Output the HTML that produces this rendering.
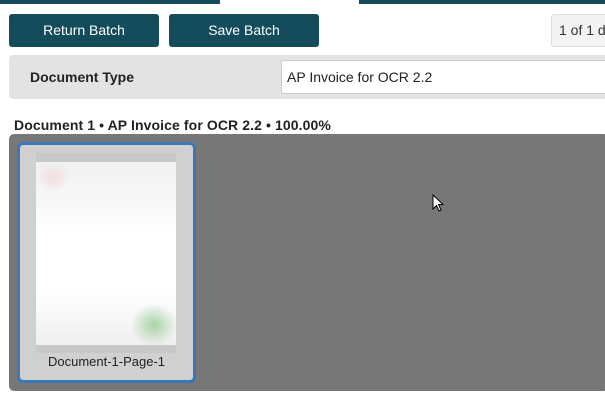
<!DOCTYPE html>
<html><head><style>
*{margin:0;padding:0;box-sizing:border-box}
body{width:605px;height:419px;background:#fff;font-family:"Liberation Sans",Arial,sans-serif;position:relative;overflow:hidden}
.a{position:absolute}
.btn{background:#154c5c;color:#fff;font-size:14px;text-align:center;line-height:33px;border-radius:3px}
</style></head><body>
<div class="a" style="left:0;top:0;width:220px;height:4px;background:#154c5c"></div>
<div class="a" style="left:359px;top:0;width:246px;height:4px;background:#154c5c"></div>
<div class="a btn" style="left:9px;top:14px;width:150px;height:33px">Return Batch</div>
<div class="a btn" style="left:169px;top:14px;width:150px;height:33px">Save Batch</div>
<div class="a" style="left:551px;top:14px;width:60px;height:33px;background:#f3f3f3;border:1px solid #ddd;border-radius:3px;font-size:14px;line-height:31px;padding-left:7px;color:#333;white-space:nowrap">1 of 1 d</div>
<div class="a" style="left:9px;top:55px;width:600px;height:44px;background:#e3e3e3;border-radius:4px"></div>
<div class="a" style="left:30px;top:69px;font-size:14px;font-weight:bold;color:#222">Document Type</div>
<div class="a" style="left:281px;top:60px;width:330px;height:34px;background:#fff;border:1px solid #ccc;border-radius:3px;font-size:14px;line-height:32px;padding-left:5px;color:#222">AP Invoice for OCR 2.2</div>
<div class="a" style="left:14px;top:117px;font-size:14px;font-weight:bold;color:#222;letter-spacing:0.1px">Document 1 • AP Invoice for OCR 2.2 • 100.00%</div>
<div class="a" style="left:9px;top:134px;width:600px;height:257px;background:#777;border-radius:5px"></div>
<div class="a" style="left:17px;top:142px;width:179px;height:241px;background:#d0d0d0;border:3px solid #3a78b8;border-radius:6px"></div>
<div class="a" style="left:36px;top:153px;width:140px;height:200px;background:#c8c8c8"></div>
<div class="a" style="left:36px;top:162px;width:140px;height:183px;background:linear-gradient(#f0f0f0,#fff 40%,#fff 70%,#efefef)"></div>
<div class="a" style="left:36px;top:162px;width:34px;height:30px;background:radial-gradient(#f0dcdf,transparent 70%)"></div>
<div class="a" style="left:132px;top:305px;width:44px;height:40px;background:radial-gradient(#a9d3a6,transparent 75%)"></div>
<div class="a" style="left:17px;top:354px;width:179px;text-align:center;font-size:13px;color:#222">Document-1-Page-1</div>
<svg class="a" style="left:432px;top:194px" width="12" height="18" viewBox="0 0 12 18"><path d="M1 1V15L4.5 11.5L7 17L9 16L6.5 10.5H11Z" fill="#fff" stroke="#000" stroke-width="1"/></svg>
</body></html>
